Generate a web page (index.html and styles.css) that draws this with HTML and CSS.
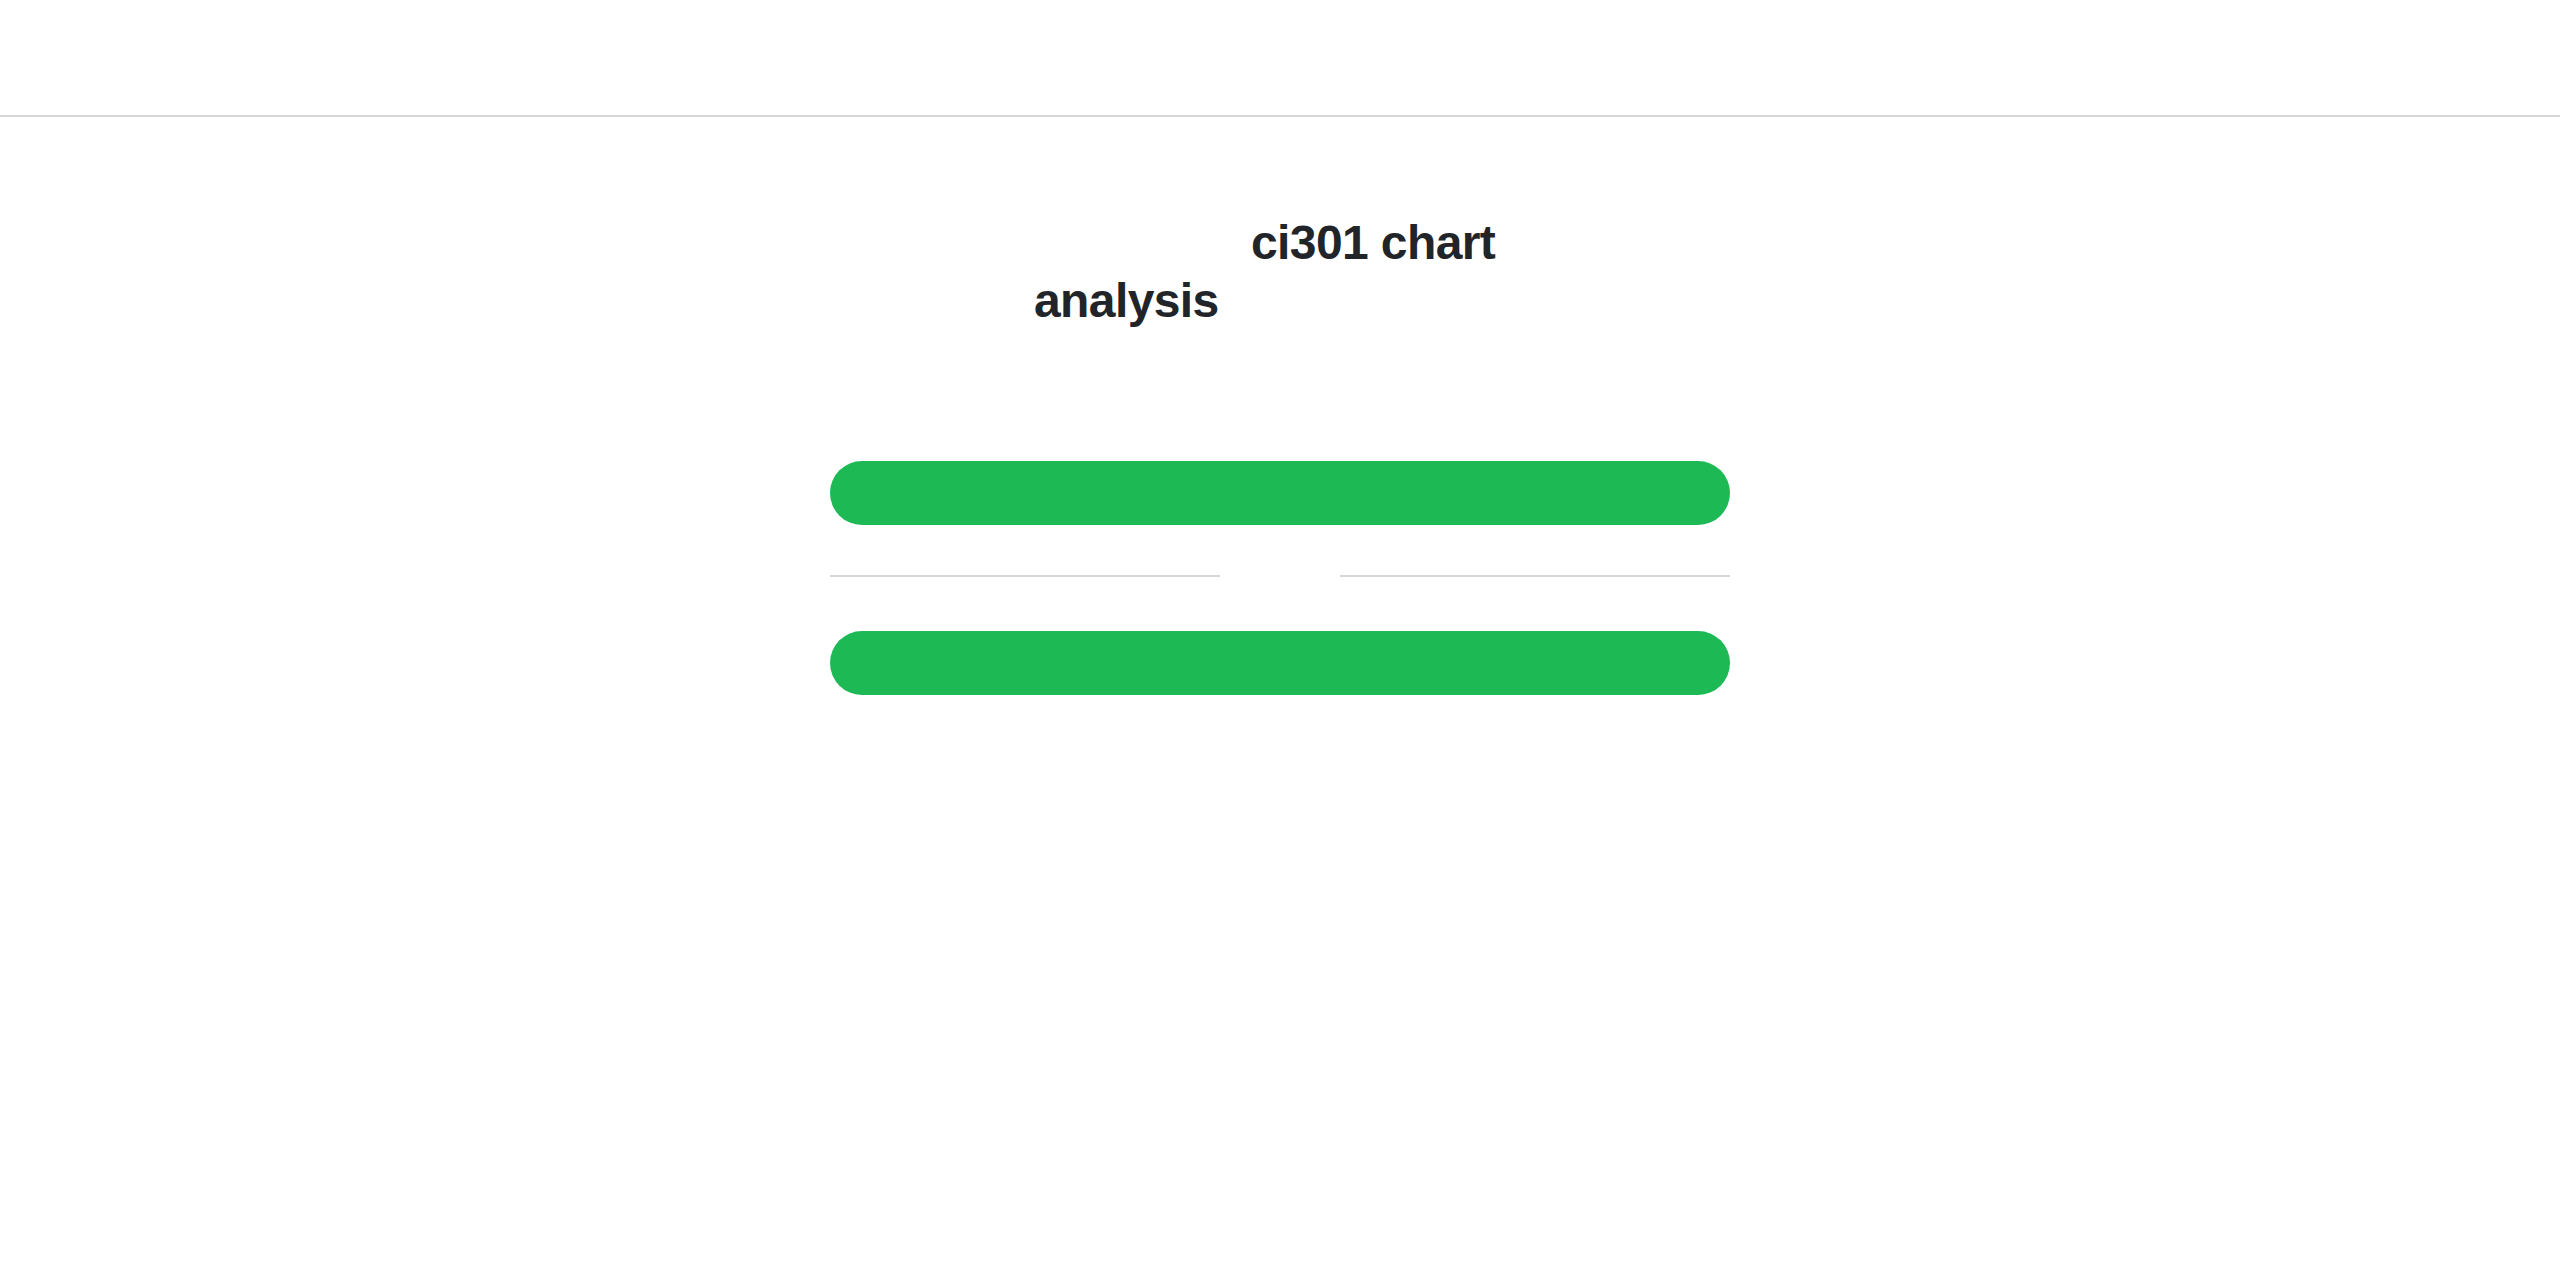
FILE: index.html
```html
<!DOCTYPE html>
<html lang="en">
<head>
<meta charset="utf-8">
<title>ci301 chart analysis</title>
<link rel="stylesheet" href="styles.css">
</head>
<body>
<header class="topbar"></header>
<main class="main">
  <h1 class="title">ci301 chart analysis</h1>
  <div class="actions">
    <div class="btn"></div>
    <div class="divider">
      <span class="divider-line"></span>
      <span class="divider-gap"></span>
      <span class="divider-line"></span>
    </div>
    <div class="btn"></div>
  </div>
</main>
</body>
</html>
```
FILE: styles.css
```css
html, body {
  margin: 0;
  padding: 0;
  background: #ffffff;
}
body {
  font-family: "Liberation Sans", Arial, sans-serif;
  color: #212529;
}
.topbar {
  height: 115px;
  border-bottom: 2px solid #d6d6d6;
}
.main {
  display: flex;
  flex-direction: column;
  align-items: center;
}
.title {
  width: 492px;
  margin: 97px 0 0 0;
  font-size: 48px;
  font-weight: 700;
  line-height: 58px;
  letter-spacing: -0.6px;
  text-indent: 217px;
  color: #212529;
}
.actions {
  width: 900px;
  margin-top: 131px;
  display: flex;
  flex-direction: column;
}
.btn {
  height: 64px;
  border-radius: 32px;
  background: #1db954;
}
.divider {
  display: flex;
  align-items: center;
  margin: 50px 0 54px;
}
.divider-line {
  flex: 1;
  height: 2px;
  background: #d6d6d6;
}
.divider-gap {
  width: 120px;
}
```
